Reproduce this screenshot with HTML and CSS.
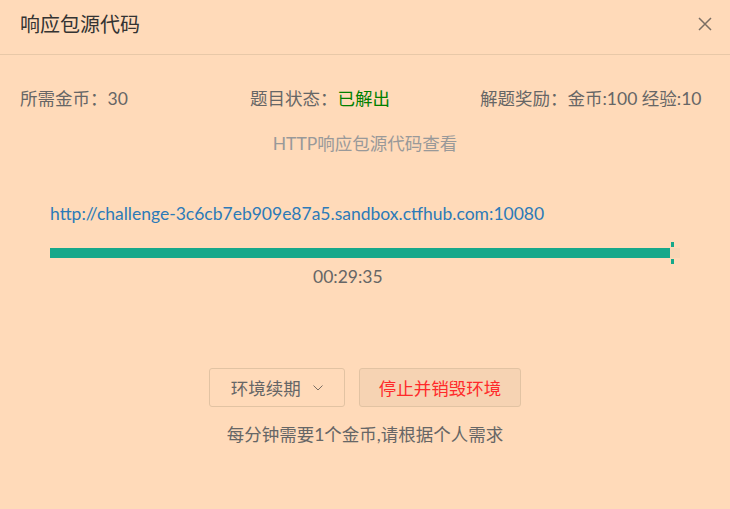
FILE: index.html
```html
<!DOCTYPE html>
<html lang="zh-CN">
<head>
<meta charset="utf-8">
<title>响应包源代码</title>
<link rel="stylesheet" href="styles.css">
</head>
<body>
<div class="dialog">
  <div class="header">
    <div class="title">响应包源代码</div>
    <span class="close" aria-label="关闭">
      <svg width="14" height="14" viewBox="0 0 14 14"><path d="M1 1 L13 13 M13 1 L1 13" stroke="#7a6e64" stroke-width="1.5" fill="none"/></svg>
    </span>
  </div>
  <div class="content">
    <div class="info">
      <div>所需金币：30</div>
      <div>题目状态：<span class="solved">已解出</span></div>
      <div>解题奖励：金币:100 经验:10</div>
    </div>
    <div class="subtitle">HTTP响应包源代码查看</div>
    <div class="env">
      <a class="url" href="#">http://challenge-3c6cb7eb909e87a5.sandbox.ctfhub.com:10080</a>
      <div class="track">
        <div class="fill" style="width: 620px"></div>
        <span class="tick" style="left: 621px"></span>
      </div>
      <div class="timer">00:29:35</div>
    </div>
    <div class="actions">
      <button class="btn">环境续期
        <svg class="chev" width="10" height="6" viewBox="0 0 10 6"><path d="M0.5 0.5 L5 5 L9.5 0.5" stroke="#7a6e64" stroke-width="1" fill="none"/></svg>
      </button>
      <button class="btn danger">停止并销毁环境</button>
    </div>
    <div class="note">每分钟需要1个金币,请根据个人需求</div>
  </div>
</div>
</body>
</html>
```

FILE: styles.css
```css
html, body {
  margin: 0;
  padding: 0;
}
body {
  width: 730px;
  height: 509px;
  overflow: hidden;
  background: #ffdab9;
  font-family: Lato, "Noto Sans CJK SC", sans-serif;
  color: #666;
}
.dialog {
  width: 730px;
}
.header {
  height: 55px;
  border-bottom: 1px solid #e8c8a8;
  padding: 11px 18px 0 20px;
  box-sizing: border-box;
  display: flex;
  justify-content: space-between;
  align-items: flex-start;
}
.title {
  font-size: 20px;
  line-height: 26px;
  color: #333;
}
.close {
  display: flex;
  margin-top: 6px;
}
.content {
  display: flex;
  flex-direction: column;
}
.info {
  margin-top: 32px;
  padding: 0 20px;
  display: grid;
  grid-template-columns: 230px 230px 230px;
  font-size: 17.5px;
  line-height: 24px;
}
.solved {
  color: #008000;
}
.subtitle {
  margin-top: 21px;
  text-align: center;
  font-size: 17.5px;
  line-height: 24px;
  color: #999;
}
.env {
  margin-top: 46px;
  padding: 0 50px;
  display: flex;
  flex-direction: column;
  align-items: flex-start;
}
.url {
  font-size: 17.5px;
  line-height: 24px;
  color: #2c7ab8;
  text-decoration: none;
}
.track {
  position: relative;
  margin-top: 22px;
  width: 630px;
  height: 10px;
  background: #f8d6b6;
}
.fill {
  height: 10px;
  background: #16a88a;
}
.tick {
  position: absolute;
  top: -6px;
  width: 3px;
  height: 22px;
  background: linear-gradient(#16a88a 0 5px, transparent 5px 17px, #16a88a 17px);
}
.timer {
  margin-top: 7px;
  margin-left: 263px;
  font-size: 17.5px;
  line-height: 24px;
}
.actions {
  margin-top: 79px;
  display: flex;
  justify-content: center;
  gap: 14px;
}
.btn {
  height: 39px;
  box-sizing: border-box;
  border: 1px solid #e2c3a3;
  border-radius: 3px;
  background: transparent;
  font-family: inherit;
  font-size: 17.5px;
  color: #666;
  padding: 0 21px;
  display: flex;
  align-items: center;
  gap: 12px;
}
.btn.danger {
  background: #f6d3b3;
  color: #ff2a2a;
  padding: 0 19px;
}
.note {
  margin-top: 16px;
  text-align: center;
  font-size: 17.5px;
  line-height: 24px;
}
```
